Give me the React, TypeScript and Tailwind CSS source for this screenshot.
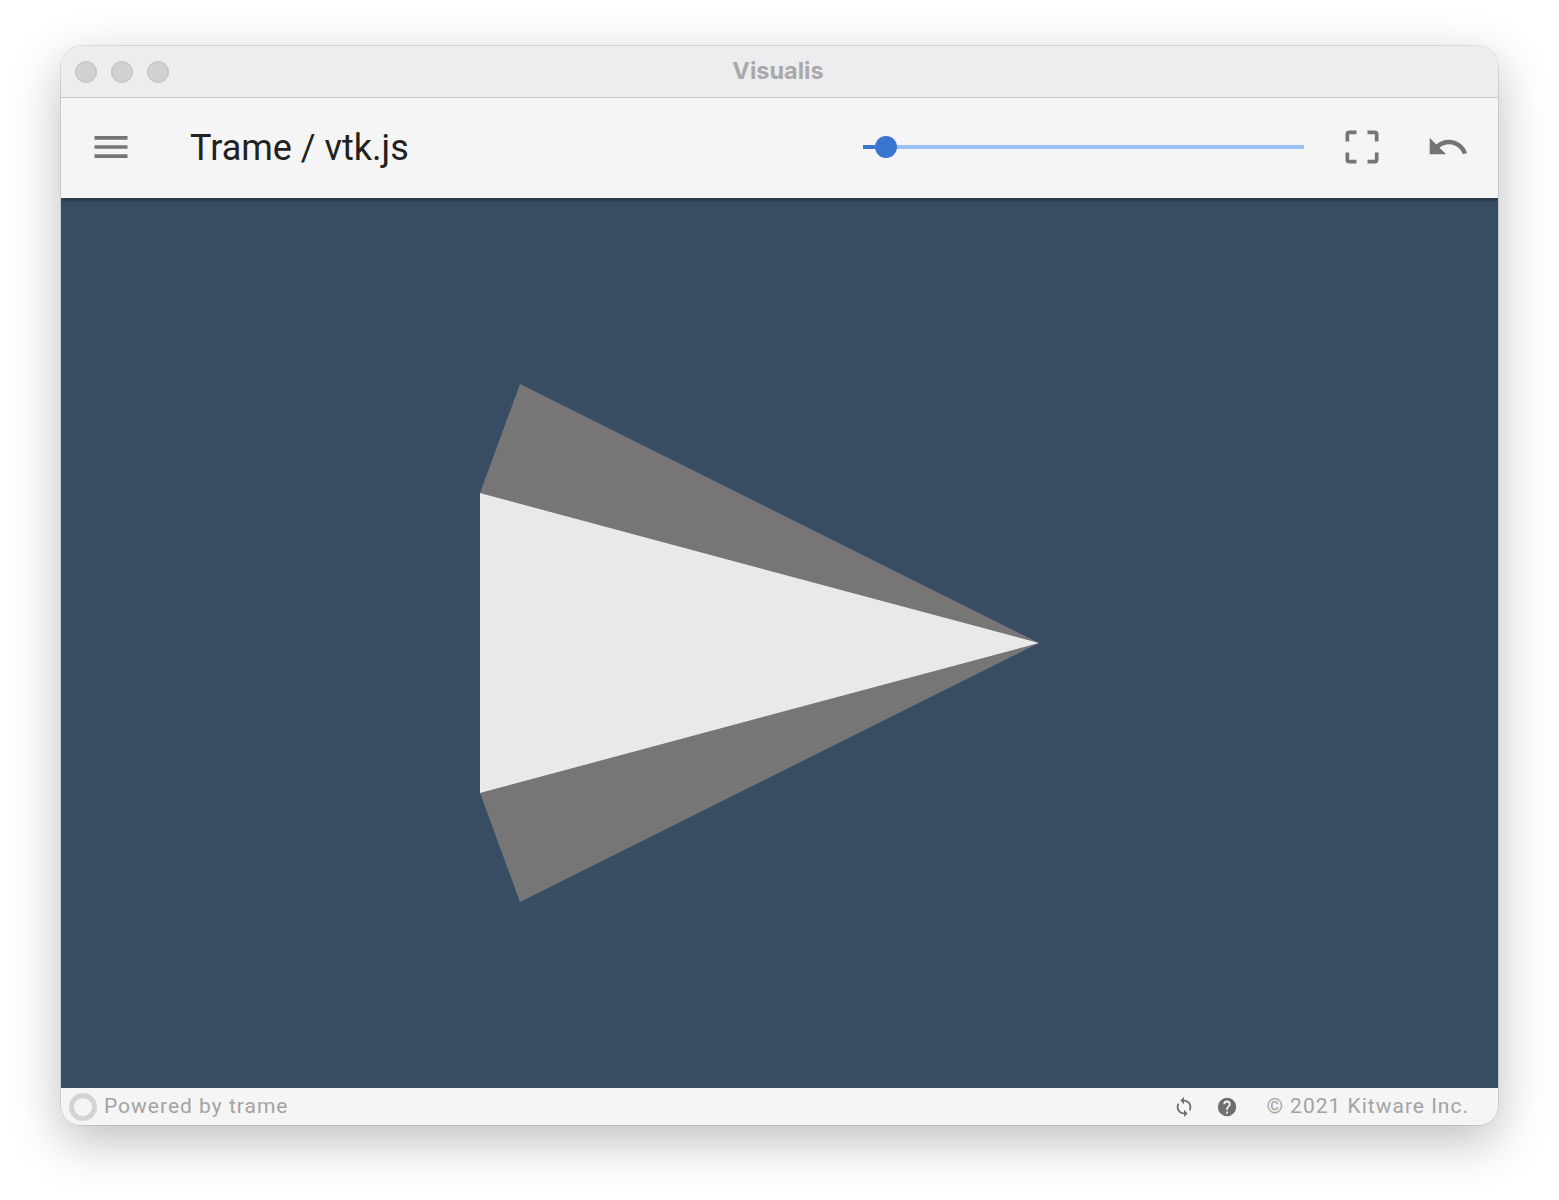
import React from "react";

const mdi = {
  menu: "M3,6H21V8H3V6M3,11H21V13H3V11M3,16H21V18H3V16Z",
  cropFree:
    "M19,3A2,2 0 0,1 21,5V9H19V5H15V3H19M19,19V15H21V19A2,2 0 0,1 19,21H15V19H19M5,19H9V21H5A2,2 0 0,1 3,19V15H5V19M3,5A2,2 0 0,1 5,3H9V5H5V9H3V5Z",
  undo: "M12.5,8C9.85,8 7.45,9 5.6,10.6L2,7V16H11L7.38,12.38C8.77,11.22 10.54,10.5 12.5,10.5C16.04,10.5 19.05,12.81 20.1,16L22.47,15.22C21.08,11.03 17.15,8 12.5,8Z",
  cached:
    "M12,18A6,6 0 0,1 6,12C6,11 6.25,10.03 6.7,9.2L5.24,7.74C4.46,8.97 4,10.43 4,12A8,8 0 0,0 12,20V23L16,19L12,15M12,4V1L8,5L12,9V6A6,6 0 0,1 18,12C18,13 17.75,13.97 17.3,14.8L18.76,16.26C19.54,15.03 20,13.57 20,12A8,8 0 0,0 12,4Z",
  help: "M15.07,11.25L14.17,12.17C13.45,12.89 13,13.5 13,15H11V14.5C11,13.39 11.45,12.39 12.17,11.67L13.41,10.41C13.78,10.05 14,9.55 14,9C14,7.89 13.1,7 12,7A2,2 0 0,0 10,9H8A4,4 0 0,1 12,5A4,4 0 0,1 16,9C16,9.88 15.64,10.67 15.07,11.25M13,19H11V17H13M12,2A10,10 0 0,0 2,12A10,10 0 0,0 12,22A10,10 0 0,0 22,12C22,6.47 17.5,2 12,2Z",
};

function Icon({ d, className }: { d: string; className: string }) {
  return (
    <svg viewBox="0 0 24 24" className={className} fill="currentColor">
      <path d={d} />
    </svg>
  );
}

export default function App() {
  return (
    <div className="h-[1200px] bg-white pl-[61px] pt-[46px] font-['Roboto',sans-serif]">
      <div className="flex h-[1079px] w-[1437px] flex-col overflow-hidden rounded-[20px] shadow-[0_0_0_0.5px_rgba(0,0,0,0.2),0_16px_50px_rgba(0,0,0,0.26)]">
        {/* Title bar */}
        <div className="grid h-[52px] shrink-0 grid-cols-3 items-center border-b border-[#d0d0d0] bg-[#edecee] px-[14px]">
          <div className="flex gap-[14px]">
            <span className="h-[22px] w-[22px] rounded-full border border-[#bfbfc0] bg-[#d1d0d2]" />
            <span className="h-[22px] w-[22px] rounded-full border border-[#bfbfc0] bg-[#d1d0d2]" />
            <span className="h-[22px] w-[22px] rounded-full border border-[#bfbfc0] bg-[#d1d0d2]" />
          </div>
          <div className="pb-[2px] pr-[3px] text-center font-['Inter',sans-serif] text-[23.5px] font-bold text-[#a9a9ab]">
            Visualis
          </div>
        </div>

        {/* Toolbar */}
        <div className="relative z-10 flex h-[100px] shrink-0 items-center bg-[#f5f5f5] pb-[2px] pl-[28px] pr-[28px] shadow-[0_2px_4px_rgba(0,0,0,0.3)]">
          <Icon d={mdi.menu} className="h-[44px] w-[44px] text-[#757575]" />
          <div className="ml-[57px] mt-[2px] text-[36px] text-[#212121]">Trame / vtk.js</div>

          <div className="ml-auto flex h-[22px] w-[441px] items-center">
            <div className="h-[4px] w-[12px] bg-[#3a75d0]" />
            <div className="h-[22px] w-[22px] shrink-0 rounded-full bg-[#3a75d0]" />
            <div className="h-[4px] flex-1 bg-[#9bc0f3]" />
          </div>
          <Icon d={mdi.cropFree} className="ml-[36px] h-[44px] w-[44px] text-[#757575]" />
          <Icon d={mdi.undo} className="ml-[42px] h-[44px] w-[44px] text-[#757575]" />
        </div>

        {/* vtk.js view */}
        <div className="min-h-0 flex-1 bg-[#384c63]">
          <svg viewBox="61 198 1437 890" className="block h-full w-full">
            <polygon points="520,384 480,493 1039,643" fill="#767676" />
            <polygon points="520,902 480,793 1039,643" fill="#767676" />
            <polygon points="480,493 1039,643 480,793" fill="#e9e9e9" />
          </svg>
        </div>

        {/* Footer */}
        <div className="flex h-[37px] shrink-0 items-center bg-[#f5f5f5] pl-[8px] pr-[29px]">
          <span className="h-[28px] w-[28px] rounded-full border-[5px] border-[#d4d4d4]" />
          <span className="ml-[7px] text-[21px] tracking-[1px] text-[#a3a3a3]">Powered by trame</span>
          <Icon d={mdi.cached} className="ml-auto h-[22px] w-[22px] text-[#6f6f6f]" />
          <Icon d={mdi.help} className="ml-[21px] h-[22px] w-[22px] text-[#6f6f6f]" />
          <span className="ml-[28px] text-[21px] tracking-[1px] text-[#a3a3a3]">© 2021 Kitware Inc.</span>
        </div>
      </div>
    </div>
  );
}
